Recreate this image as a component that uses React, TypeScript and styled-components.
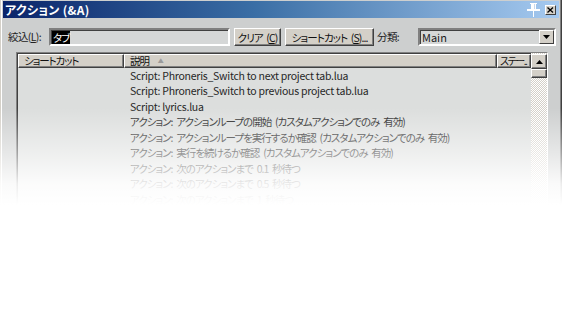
import React from 'react';
import styled, { createGlobalStyle } from 'styled-components';

const GlobalStyle = createGlobalStyle`
  html, body {
    margin: 0;
    padding: 0;
    background: #ffffff;
  }
  body {
    font-family: 'Noto Sans CJK JP', 'Liberation Sans', sans-serif;
    font-size: 10.5px;
    font-feature-settings: 'palt';
    color: #1a1a1a;
  }
`;

const Page = styled.div`
  position: relative;
  width: 562px;
  height: 332px;
  overflow: hidden;
`;

// white fade that washes out the lower part of the window
const Fade = styled.div`
  position: absolute;
  inset: 0;
  pointer-events: none;
  background: linear-gradient(
    to bottom,
    rgba(255, 255, 255, 0) 0px,
    rgba(255, 255, 255, 0) 108px,
    rgba(255, 255, 255, 0.5) 152px,
    rgba(255, 255, 255, 0.9) 184px,
    #ffffff 205px
  );
`;

const Frame = styled.div`
  width: 562px;
  height: 260px;
  box-sizing: border-box;
  padding: 1px 3px 0 3px;
  background: #cdcfcf;
  box-shadow: inset 1px 0 0 #d4d0c8, inset 2px 0 0 #ffffff, inset -1px 0 0 #404040,
    inset -2px 0 0 #808080;
`;

const TitleBar = styled.div`
  height: 17px;
  display: flex;
  align-items: center;
  padding: 0 3px 0 2px;
  background: linear-gradient(to right, #0a246a 0%, #3a6ea5 45%, #a6caf0 100%);
`;

const Title = styled.span`
  flex: 1;
  color: #ffffff;
  font-weight: bold;
  font-size: 12px;
  letter-spacing: 0.3px;
  line-height: 17px;
`;

const CloseBox = styled.div`
  width: 11px;
  height: 10px;
  margin-left: 4px;
  box-sizing: border-box;
  background: #d4d0c8;
  border: 1px solid;
  border-color: #ffffff #404040 #404040 #ffffff;
  display: flex;
  align-items: center;
  justify-content: center;
`;

const Toolbar = styled.div`
  display: flex;
  align-items: center;
  height: 18px;
  margin-top: 10px;
  padding-left: 5px;
`;

const Label = styled.span<{ $w?: number }>`
  width: ${(p) => (p.$w ? `${p.$w}px` : 'auto')};
  line-height: 18px;
  color: #222;
  white-space: nowrap;
  letter-spacing: -0.6px;
`;

const Sunken = styled.div<{ $w: number }>`
  width: ${(p) => p.$w}px;
  height: 18px;
  box-sizing: border-box;
  border: 2px solid;
  border-color: #808080 #ffffff #ffffff #808080;
  box-shadow: inset 1px 1px 0 #404040;
  background: #d5d7d7;
  display: flex;
  align-items: center;
`;

const Selected = styled.span`
  margin-left: 1px;
  padding: 0 1px;
  background: #000000;
  color: #ffffff;
  line-height: 13px;
  letter-spacing: -1px;
`;

const Button = styled.div<{ $w: number }>`
  width: ${(p) => p.$w}px;
  height: 18px;
  margin-left: 4px;
  box-sizing: border-box;
  background: #d4d0c8;
  border: 1px solid;
  border-color: #ffffff #404040 #404040 #ffffff;
  box-shadow: inset -1px -1px 0 #808080;
  display: flex;
  align-items: center;
  justify-content: center;
  white-space: nowrap;
  letter-spacing: -0.9px;
  word-spacing: 2px;
  color: #111;
`;

const ComboText = styled.span`
  flex: 1;
  padding-left: 2px;
  font-size: 11px;
`;

const DropButton = styled.div`
  width: 15px;
  height: 14px;
  box-sizing: border-box;
  background: #d4d0c8;
  border: 1px solid;
  border-color: #ffffff #404040 #404040 #ffffff;
  display: flex;
  align-items: center;
  justify-content: center;
`;

const ListView = styled.div`
  margin: 6px 0 0 13px;
  width: 532px;
  height: 200px;
  box-sizing: border-box;
  border: 1px solid;
  border-color: #808080 #ffffff #ffffff #808080;
  box-shadow: inset 1px 1px 0 #404040;
  background: #dcdedd;
  display: grid;
  grid-template-columns: 1fr 16px;
`;

const ListBody = styled.div`
  padding: 1px 0 0 1px;
  min-width: 0;
`;

const HeaderRow = styled.div`
  display: grid;
  grid-template-columns: 106px 373px 1fr;
  height: 14px;
`;

const HeaderCell = styled.div<{ $pad?: number; $small?: boolean }>`
  box-sizing: border-box;
  background: #d4d0c8;
  border: 1px solid;
  border-color: #ffffff #404040 #404040 #ffffff;
  box-shadow: inset -1px -1px 0 #808080;
  padding-left: ${(p) => p.$pad ?? 5}px;
  display: flex;
  align-items: center;
  white-space: nowrap;
  overflow: hidden;
  line-height: 12px;
  font-size: ${(p) => (p.$small ? '10px' : '10.5px')};
  letter-spacing: ${(p) => (p.$small ? '-1.4px' : '-1.1px')};
  color: #111;
`;

const SortArrow = styled.span`
  margin-left: 9px;
  font-size: 6px;
  color: #9a9a9a;
`;

const Row = styled.div`
  display: grid;
  grid-template-columns: 112px 1fr;
  height: 15.45px;
  line-height: 15.45px;
  white-space: nowrap;
`;

const Cell = styled.span<{ $jp?: boolean }>`
  overflow: hidden;
  letter-spacing: ${(p) => (p.$jp ? '-1px' : '-0.25px')};
  word-spacing: ${(p) => (p.$jp ? '2.5px' : '0')};
  color: #262626;
`;

const ScrollBar = styled.div`
  display: flex;
  flex-direction: column;
  padding-top: 1px;
  background-color: #ffffff;
  background-image: repeating-conic-gradient(#d4d0c8 0 25%, #ffffff 0 50%);
  background-size: 2px 2px;
`;

const ScrollButton = styled.div<{ $h: number }>`
  height: ${(p) => p.$h}px;
  box-sizing: border-box;
  background: #d4d0c8;
  border: 1px solid;
  border-color: #ffffff #404040 #404040 #ffffff;
  box-shadow: inset -1px -1px 0 #808080;
  display: flex;
  align-items: center;
  justify-content: center;
`;

const Tri = ({ up }: { up?: boolean }) => (
  <svg width="7" height="4" viewBox="0 0 7 4">
    <polygon points={up ? '0,4 7,4 3.5,0' : '0,0 7,0 3.5,4'} fill="#000" />
  </svg>
);

const PinIcon = () => (
  <svg width="15" height="16" viewBox="0 0 15 16">
    <rect x="4" y="1" width="7" height="1" fill="#fff" />
    <rect x="5" y="2" width="5" height="5" fill="#fff" />
    <rect x="1" y="7" width="13" height="2" fill="#fff" />
    <rect x="7" y="9" width="1" height="6" fill="#fff" />
    <rect x="8" y="2" width="1" height="5" fill="#c8d8ec" />
  </svg>
);

const CloseIcon = () => (
  <svg width="7" height="6" viewBox="0 0 7 6">
    <path d="M0.5 0.5 L6 5.5 M6 0.5 L0.5 5.5" stroke="#000" strokeWidth="1.3" />
  </svg>
);

const rows = [
  'Script: Phroneris_Switch to next project tab.lua',
  'Script: Phroneris_Switch to previous project tab.lua',
  'Script: lyrics.lua',
  'アクション: アクションループの開始 (カスタムアクションでのみ 有効)',
  'アクション: アクションループを実行するか確認 (カスタムアクションでのみ 有効)',
  'アクション: 実行を続けるか確認 (カスタムアクションでのみ 有効)',
  'アクション: 次のアクションまで 0.1 秒待つ',
  'アクション: 次のアクションまで 0.5 秒待つ',
  'アクション: 次のアクションまで 1 秒待つ',
];

const App: React.FC = () => {
  return (
    <Page>
      <GlobalStyle />
      <Frame>
        <TitleBar>
          <Title>アクション (&amp;A)</Title>
          <PinIcon />
          <CloseBox>
            <CloseIcon />
          </CloseBox>
        </TitleBar>

        <Toolbar>
          <Label $w={41}>
            絞込(<u>L</u>):
          </Label>
          <Sunken $w={181}>
            <Selected>タブ</Selected>
          </Sunken>
          <Button $w={47}>
            クリア (<u>C</u>)
          </Button>
          <Button $w={89}>
            ショートカット (<u>S</u>)...
          </Button>
          <Label $w={41} style={{ paddingLeft: 3 }}>
            分類:
          </Label>
          <Sunken $w={138}>
            <ComboText>Main</ComboText>
            <DropButton>
              <Tri />
            </DropButton>
          </Sunken>
        </Toolbar>

        <ListView>
          <ListBody>
            <HeaderRow>
              <HeaderCell>ショートカット</HeaderCell>
              <HeaderCell>
                説明<SortArrow>▲</SortArrow>
              </HeaderCell>
              <HeaderCell $pad={2} $small>
                ステー..
              </HeaderCell>
            </HeaderRow>
            {rows.map((r) => (
              <Row key={r}>
                <Cell />
                <Cell $jp={!r.startsWith('Script')}>{r}</Cell>
              </Row>
            ))}
          </ListBody>
          <ScrollBar>
            <ScrollButton $h={15}>
              <Tri up />
            </ScrollButton>
            <ScrollButton $h={9} />
          </ScrollBar>
        </ListView>
      </Frame>
      <Fade />
    </Page>
  );
};

export default App;
